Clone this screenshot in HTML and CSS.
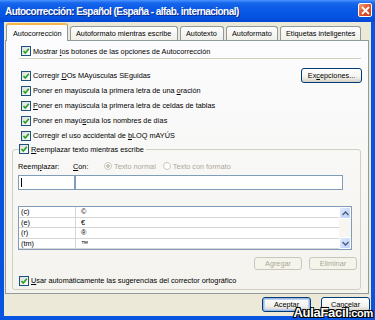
FILE: index.html
```html
<!DOCTYPE html>
<html lang="es">

<head>
    <meta charset="UTF-8">
    <meta name="viewport" content="width=device-width, initial-scale=1.0">
    <title>Autocorrección</title>
    <link rel="stylesheet" href="styles.css">
</head>

<body>

    <div class="window">
        <div class="titlebar">
            <span class="title">Autocorrección: Español (España - alfab. internacional)</span>
            <span class="close">
                <svg width="9" height="9" viewBox="0 0 9 9">
                    <path d="M1 1 L8 8 M8 1 L1 8" stroke="#fff" stroke-width="1.8" />
                </svg>
            </span>
        </div>

        <div class="client">
            <div class="tabs">
                <span class="tab active">Autocorrección</span>
                <span class="tab t2">Autoformato mientras escribe</span>
                <span class="tab t3">Autotexto</span>
                <span class="tab t4">Autoformato</span>
                <span class="tab t5">Etiquetas inteligentes</span>
            </div>

            <div class="panel">
                <div class="row first">
                    <span class="box"></span><span>Mostrar <u>l</u>os botones de las opciones de Autocorrección</span>
                </div>
                <div class="sep"></div>

                <div class="row">
                    <span class="box"></span><span>Corregir <u>D</u>Os MAyúsculas SEguidas</span>
                    <span class="btn excep"><span>Ex<u>c</u>epciones...</span></span>
                </div>
                <div class="row"><span class="box"></span><span>Poner en mayúscula la primera letra de una <u>o</u>ración</span></div>
                <div class="row"><span class="box"></span><span><u>P</u>oner en mayúscula la primera letra de celdas de tablas</span></div>
                <div class="row"><span class="box"></span><span>Poner en mayú<u>s</u>cula los nombres de días</span></div>
                <div class="row"><span class="box"></span><span>Corregir el uso accidental de <u>b</u>LOQ mAYÚS</span></div>

                <fieldset class="group">
                    <legend><span class="box"></span><span><u>R</u>eemplazar texto mientras escribe</span></legend>

                    <div class="labels">
                        <span class="lbl-from">Reem<u>p</u>lazar:</span>
                        <span class="lbl-to"><u>C</u>on:</span>
                        <span class="radio on"></span><span class="dim">Texto normal</span>
                        <span class="radio"></span><span class="dim">Texto con formato</span>
                    </div>

                    <div class="inputs">
                        <span class="field from"><span class="caret"></span></span>
                        <span class="field to"></span>
                    </div>

                    <div class="list">
                        <div class="rows">
                            <div class="item"><span class="k">(c)</span><span class="v">©</span></div>
                            <div class="item"><span class="k">(e)</span><span class="v">€</span></div>
                            <div class="item"><span class="k">(r)</span><span class="v">®</span></div>
                            <div class="item"><span class="k">(tm)</span><span class="v">™</span></div>
                        </div>
                        <div class="scroll">
                            <span class="arrow">
                                <svg width="7" height="5" viewBox="0 0 7 5"><path d="M0.5 4 L3.5 1 L6.5 4" fill="none" stroke="#4d6185" stroke-width="1.5" /></svg>
                            </span>
                            <span class="track"></span>
                            <span class="arrow">
                                <svg width="7" height="5" viewBox="0 0 7 5"><path d="M0.5 1 L3.5 4 L6.5 1" fill="none" stroke="#4d6185" stroke-width="1.5" /></svg>
                            </span>
                        </div>
                    </div>

                    <div class="actions">
                        <span class="btn off">Agregar</span>
                        <span class="btn off">Eliminar</span>
                    </div>

                    <div class="row last"><span class="box"></span><span><u>U</u>sar automáticamente las sugerencias del corrector ortográfico</span></div>
                </fieldset>
            </div>

            <div class="footer">
                <span class="btn default">Aceptar</span>
                <span class="btn">Cancelar</span>
            </div>
        </div>

        <div class="watermark">AulaFacil<span>.com</span></div>
    </div>

</body>

</html>
```

FILE: styles.css
```css
body {
    margin: 0;
    background: #ece9d8;
}

body * {
    font-family: "Liberation Sans", Arial, sans-serif;
    font-size: 7.3px;
    color: #000;
    box-sizing: border-box;
}

.window {
    position: relative;
    width: 375px;
    height: 320px;
    background: #0853e0;
    padding: 0 4px 4px 4px;
    display: flex;
    flex-direction: column;
    overflow: hidden;
}

.titlebar {
    height: 22px;
    margin: 0 -4px;
    padding: 0 3px 0 5px;
    display: flex;
    align-items: center;
    justify-content: space-between;
    background: linear-gradient(#4a93ff 0, #1766ec 3px, #0a5ae6 9px, #0654e2 16px, #0349d4 22px);
}

.title {
    color: #fff;
    font-weight: bold;
    font-size: 10px;
    letter-spacing: -0.55px;
    text-shadow: 1px 1px 0 #0a2a8a;
}

.close {
    width: 14px;
    height: 14px;
    margin-top: -2px;
    border: 1px solid #fff;
    border-radius: 2px;
    background: linear-gradient(135deg, #f0a080, #e0542a 50%, #c83a18);
    display: flex;
    align-items: center;
    justify-content: center;
}

.client {
    flex: 1;
    background: #ece9d8;
    display: flex;
    flex-direction: column;
}

.tabs {
    height: 18px;
    display: flex;
    align-items: flex-end;
    padding-left: 2px;
}

.tab {
    height: 14px;
    margin-right: 2px;
    padding: 0 5px;
    border: 1px solid #919b9c;
    border-bottom: none;
    border-radius: 3px 3px 0 0;
    background: linear-gradient(#fefefe, #f0efe9);
    display: flex;
    align-items: center;
    white-space: nowrap;
}

.tab.active {
    height: 18px;
    width: 62px;
    padding-left: 6px;
    border-top: 2px solid #f5b846;
    background: #fcfcfe;
    margin-bottom: -1px;
    position: relative;
    z-index: 1;
}

.t2 { width: 108px; }
.t3 { width: 44px; }
.t4 { width: 52px; }
.t5 { width: 81px; }

.panel {
    height: 254px;
    width: 364px;
    margin-left: 1px;
    border: 1px solid #919b9c;
    background: linear-gradient(#fcfcfe, #f4f3ee);
    display: flex;
    flex-direction: column;
    padding: 0 6px 0 6px;
}

.row {
    height: 15px;
    display: flex;
    align-items: center;
    padding-left: 9px;
    white-space: nowrap;
}

.row.first {
    height: 12px;
    margin-top: 4px;
}

.sep {
    height: 2px;
    margin: 1px 1px 8px 7px;
    border-top: 1px solid #d0d0bf;
    border-bottom: 1px solid #fff;
}

.box {
    width: 10px;
    height: 10px;
    margin-right: 2px;
    flex: none;
    border: 1px solid #1c5180;
    background:
        url("data:image/svg+xml,%3Csvg xmlns='http://www.w3.org/2000/svg' width='8' height='8'%3E%3Cpath d='M1.5 4 L3.3 6 L6.8 1.8' fill='none' stroke='%2321a121' stroke-width='1.6'/%3E%3C/svg%3E") center no-repeat,
        linear-gradient(135deg, #dcdcd7, #fff);
}

.btn {
    height: 15px;
    border: 1px solid #003c74;
    border-radius: 3px;
    background: linear-gradient(#fff, #f4f3ee 60%, #d6d0c5);
    display: flex;
    align-items: center;
    justify-content: center;
}

.excep {
    width: 61px;
    margin-left: auto;
}

.group {
    margin: 0 1px 0 0;
    padding: 0 0 0 5px;
    height: 147px;
    border: 1px solid #d0d0bf;
    border-radius: 3px;
    display: flex;
    flex-direction: column;
}

.group legend {
    display: flex;
    align-items: center;
    height: 12px;
    padding: 0 2px 0 0;
    margin-left: 1px;
    white-space: nowrap;
}

.labels {
    height: 14px;
    margin-top: 4px;
    display: flex;
    align-items: center;
    white-space: nowrap;
}

.lbl-from { width: 55px; }
.lbl-to { width: 31px; }

.dim {
    color: #aca899;
    margin-right: 7px;
}

.radio {
    width: 8px;
    height: 8px;
    margin-right: 2px;
    border-radius: 50%;
    border: 1px solid #cac8bb;
    background: #fff;
}

.radio.on {
    background: radial-gradient(circle, #cac8bb 0 1.6px, #fff 2px);
}

.inputs {
    display: flex;
    height: 15px;
    margin-top: 2px;
}

.field {
    height: 15px;
    border: 1px solid #7f9db9;
    background: #fff;
}

.from {
    width: 57px;
    padding: 2px 0 0 2px;
}

.caret {
    display: block;
    width: 1px;
    height: 9px;
    background: #000;
}

.to {
    width: 268px;
}

.list {
    width: 334px;
    height: 44px;
    margin-top: 16px;
    border: 1px solid #7f9db9;
    background: #fff;
    display: flex;
}

.rows {
    flex: 1;
}

.item {
    height: 10.5px;
    display: flex;
    border-bottom: 1px solid #d6d6d6;
    line-height: 10px;
}

.k {
    width: 57px;
    padding-left: 2px;
    border-right: 1px solid #d6d6d6;
}

.v {
    padding-left: 5px;
}

.scroll {
    width: 12px;
    display: flex;
    flex-direction: column;
    background: #f7f6f1;
}

.arrow {
    height: 12px;
    border-radius: 2px;
    background: linear-gradient(135deg, #e0e9fd, #bdd0f8);
    border: 1px solid #fff;
    display: flex;
    align-items: center;
    justify-content: center;
}

.track {
    flex: 1;
}

.actions {
    display: flex;
    justify-content: flex-end;
    gap: 7px;
    margin: 7px 3px 0 0;
}

.actions .btn {
    width: 48px;
    height: 13px;
}

.btn.off {
    border-color: #c9c7ba;
    color: #aca899;
    background: #f5f4ea;
}

.row.last {
    padding-left: 1px;
    margin-top: 3px;
}

.footer {
    display: flex;
    justify-content: flex-end;
    gap: 10px;
    padding: 3px 1px 0 0;
}

.footer .btn {
    width: 49px;
}

.btn.default {
    box-shadow: inset 0 0 0 1px #9cb6e8, inset 0 0 0 2px #c0d2f2;
}

.watermark {
    position: absolute;
    right: 2px;
    bottom: 0;
    line-height: 14px;
    font-size: 13px;
    font-weight: bold;
    color: #fff;
    letter-spacing: -0.3px;
    text-shadow: 1px 1px 0 #000, -1px -1px 0 #000, 1px -1px 0 #000, -1px 1px 0 #000;
}

.watermark span {
    font-size: 11px;
    font-weight: bold;
    color: #fff;
}
```
